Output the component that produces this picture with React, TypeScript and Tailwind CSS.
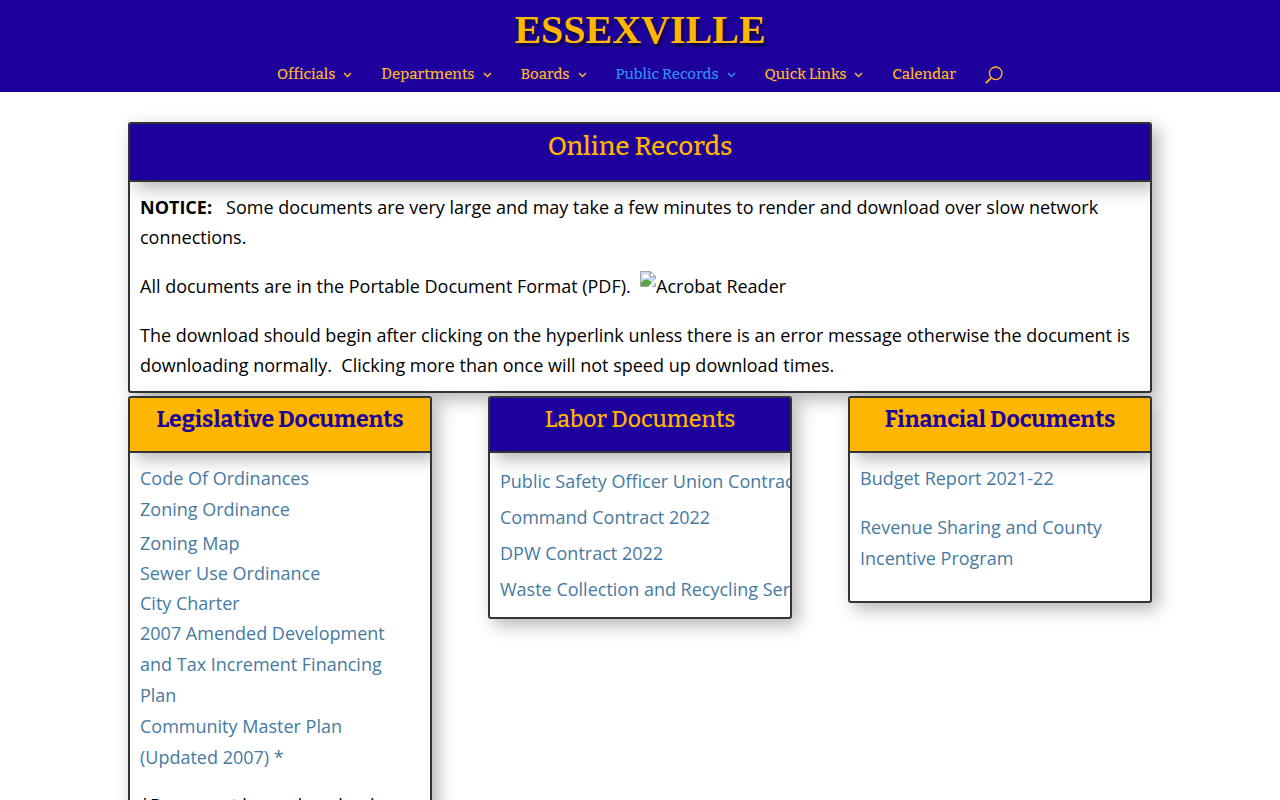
import React from 'react';

interface NavItem {
  label: string;
  menu?: boolean;
  active?: boolean;
}

const navItems: NavItem[] = [
  { label: 'Officials', menu: true },
  { label: 'Departments', menu: true },
  { label: 'Boards', menu: true },
  { label: 'Public Records', menu: true, active: true },
  { label: 'Quick Links', menu: true },
  { label: 'Calendar' },
];

const ChevronIcon = () => (
  <svg width="9" height="6" viewBox="0 0 9 6" fill="none" stroke="currentColor" strokeWidth="1.5" aria-hidden="true">
    <path d="M1 1l3.5 3.5L8 1" />
  </svg>
);

const SearchIcon = () => (
  <svg width="18" height="18" viewBox="0 0 18 18" fill="none" stroke="currentColor" strokeWidth="1.3" aria-hidden="true">
    <circle cx="10.7" cy="7.3" r="6.3" />
    <path d="M6.2 11.8L.9 17.1" strokeWidth="1.8" />
  </svg>
);

const MissingImageIcon = () => (
  <svg width="16" height="16" viewBox="0 0 16 16" className="inline-block align-top" aria-hidden="true">
    <path d="M.5.5h10l5 5v10H.5z" fill="#c5d7f3" />
    <path d="M3 7a1.8 1.8 0 0 1 1-3.2 2.3 2.3 0 0 1 4.2.7A1.5 1.5 0 0 1 8.5 7z" fill="#fff" />
    <path d="M1 15v-3.5q4.5-5 9-1.5L12 12l-3 3z" fill="#5aa746" />
    <path d="M8 16l8-8v3l-5 5z" fill="#fff" />
    <path d="M8.5 15.5H.5V.5h10l5 5v2.5M15.5 12v3.5H12" fill="none" stroke="#a3a3a3" />
    <path d="M10.5.5v5h5z" fill="#fff" stroke="#a3a3a3" />
  </svg>
);

interface CardProps {
  title: string;
  variant: 'blue' | 'gold';
  large?: boolean;
  children: React.ReactNode;
}

const Card: React.FC<CardProps> = ({ title, variant, large, children }) => {
  const colors = variant === 'blue' ? 'bg-[#1e009c] text-[#ffb600] font-medium' : 'bg-[#ffb600] text-[#1e009c] font-bold';
  const size = large ? 'h-[58px] pt-[7px] text-[26px]' : 'h-[55px] pt-[5px] text-[23px]';
  return (
    <section className="overflow-hidden rounded-[3px] border-2 border-[#333333] bg-white shadow-[6px_6px_18px_0_rgba(0,0,0,0.3)]">
      <h2
        className={`border-b-2 border-[#333333] text-center font-['Bitter','DejaVu_Serif',serif] leading-8 whitespace-nowrap shadow-[6px_6px_18px_0_rgba(0,0,0,0.3)] ${size} ${colors}`}
      >
        {title}
      </h2>
      {children}
    </section>
  );
};

const DocLink: React.FC<{ children: React.ReactNode }> = ({ children }) => (
  <a href="#" className="block text-[#467a9f] hover:underline">
    {children}
  </a>
);

export default function App() {
  return (
    <div className="min-h-screen bg-white font-['Open_Sans',sans-serif] text-lg text-black">
      <header className="flex flex-col items-center bg-[#1e009c] text-[#ffb62a]">
        <a
          href="#"
          className="pt-2 font-['Liberation_Serif',serif] text-[40px] leading-11 font-bold text-[#ffb600] [text-shadow:2px_3px_3px_#0a0038]"
        >
          ESSEXVILLE
        </a>
        <nav className="flex h-10 items-center gap-[29px] pt-1.5 font-['Bitter','DejaVu_Serif',serif] text-[15px] font-medium">
          {navItems.map((item) => (
            <a
              key={item.label}
              href="#"
              className={`flex items-center gap-2 whitespace-nowrap ${item.active ? 'text-[#2c8ff5]' : ''}`}
            >
              {item.label}
              {item.menu && <ChevronIcon />}
            </a>
          ))}
          <button type="button" aria-label="Search">
            <SearchIcon />
          </button>
        </nav>
      </header>

      <main className="mx-auto flex w-4/5 flex-col gap-[3px] pt-[30px]">
        <Card title="Online Records" variant="blue" large>
          <div className="flex flex-col gap-[19px] px-2.5 pt-2.5 pb-[11px] leading-[30px]">
            <p>
              <strong>NOTICE:</strong>&nbsp;&nbsp; Some documents are very large and may take a few minutes to render and
              download over slow network connections.
            </p>
            <p>
              All documents are in the Portable Document Format (PDF).&nbsp;{' '}
              <span className="whitespace-nowrap">
                <MissingImageIcon />
                Acrobat Reader
              </span>
            </p>
            <p>
              The download should begin after clicking on the hyperlink unless there is an error message otherwise the
              document is downloading normally.&nbsp; Clicking more than once will not speed up download times.
            </p>
          </div>
        </Card>

        <div className="grid grid-cols-3 items-start gap-14">
          <Card title="Legislative Documents" variant="gold">
            <div className="p-2.5 leading-[31px]">
              <DocLink>Code Of Ordinances</DocLink>
              <DocLink>Zoning Ordinance</DocLink>
              <div className="mt-[3px] leading-[30px]">
                <DocLink>Zoning Map</DocLink>
                <DocLink>Sewer Use Ordinance</DocLink>
                <DocLink>City Charter</DocLink>
              </div>
              <DocLink>2007 Amended Development and Tax Increment Financing Plan</DocLink>
              <DocLink>Community Master Plan (Updated 2007) *</DocLink>
              <p className="mt-[17px]">*Document has a download</p>
            </div>
          </Card>

          <Card title="Labor Documents" variant="blue">
            <div className="p-2.5 leading-9 whitespace-nowrap">
              <DocLink>Public Safety Officer Union Contract 2022</DocLink>
              <DocLink>Command Contract 2022</DocLink>
              <DocLink>DPW Contract 2022</DocLink>
              <DocLink>Waste Collection and Recycling Services</DocLink>
            </div>
          </Card>

          <Card title="Financial Documents" variant="gold">
            <div className="flex flex-col gap-[18px] px-2.5 pt-2.5 pb-[27px] leading-[31px]">
              <DocLink>Budget Report 2021-22</DocLink>
              <DocLink>Revenue Sharing and County Incentive Program</DocLink>
            </div>
          </Card>
        </div>
      </main>
    </div>
  );
}
